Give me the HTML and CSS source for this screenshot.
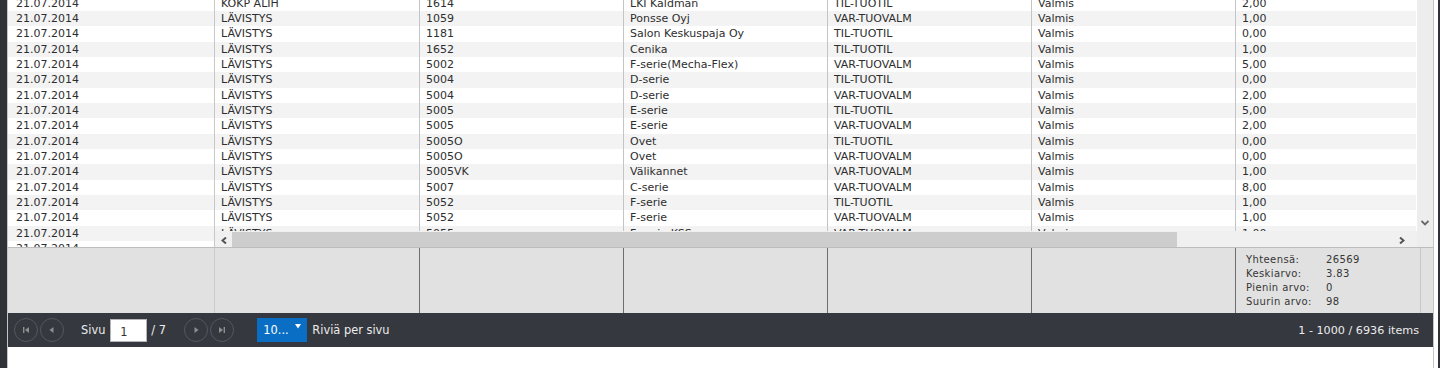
FILE: index.html
```html
<!DOCTYPE html>
<html lang="fi">
<head>
    <meta charset="UTF-8">
    <title>Työvaiheet</title>
    <link rel="stylesheet" href="styles.css">
</head>
<body>
<div class="page">
    <div class="grid">
        <div class="grid-content">
            <div class="locked">
                <div class="rows locked-rows">
                    <div class="row"><div class="cell">21.07.2014</div></div>
                    <div class="row"><div class="cell">21.07.2014</div></div>
                    <div class="row"><div class="cell">21.07.2014</div></div>
                    <div class="row"><div class="cell">21.07.2014</div></div>
                    <div class="row"><div class="cell">21.07.2014</div></div>
                    <div class="row"><div class="cell">21.07.2014</div></div>
                    <div class="row"><div class="cell">21.07.2014</div></div>
                    <div class="row"><div class="cell">21.07.2014</div></div>
                    <div class="row"><div class="cell">21.07.2014</div></div>
                    <div class="row"><div class="cell">21.07.2014</div></div>
                    <div class="row"><div class="cell">21.07.2014</div></div>
                    <div class="row"><div class="cell">21.07.2014</div></div>
                    <div class="row"><div class="cell">21.07.2014</div></div>
                    <div class="row"><div class="cell">21.07.2014</div></div>
                    <div class="row"><div class="cell">21.07.2014</div></div>
                    <div class="row"><div class="cell">21.07.2014</div></div>
                    <div class="row"><div class="cell">21.07.2014</div></div>
                </div>
            </div>
            <div class="scroll-wrap">
                <div class="scroll-main">
                    <div class="rows data-rows">
                        <div class="row"><div class="cell">KOKP ALIH</div><div class="cell">1614</div><div class="cell">LKI Käldman</div><div class="cell">TIL-TUOTIL</div><div class="cell">Valmis</div><div class="cell">2,00</div></div>
                        <div class="row"><div class="cell">LÄVISTYS</div><div class="cell">1059</div><div class="cell">Ponsse Oyj</div><div class="cell">VAR-TUOVALM</div><div class="cell">Valmis</div><div class="cell">1,00</div></div>
                        <div class="row"><div class="cell">LÄVISTYS</div><div class="cell">1181</div><div class="cell">Salon Keskuspaja Oy</div><div class="cell">TIL-TUOTIL</div><div class="cell">Valmis</div><div class="cell">0,00</div></div>
                        <div class="row"><div class="cell">LÄVISTYS</div><div class="cell">1652</div><div class="cell">Cenika</div><div class="cell">TIL-TUOTIL</div><div class="cell">Valmis</div><div class="cell">1,00</div></div>
                        <div class="row"><div class="cell">LÄVISTYS</div><div class="cell">5002</div><div class="cell">F-serie(Mecha-Flex)</div><div class="cell">VAR-TUOVALM</div><div class="cell">Valmis</div><div class="cell">5,00</div></div>
                        <div class="row"><div class="cell">LÄVISTYS</div><div class="cell">5004</div><div class="cell">D-serie</div><div class="cell">TIL-TUOTIL</div><div class="cell">Valmis</div><div class="cell">0,00</div></div>
                        <div class="row"><div class="cell">LÄVISTYS</div><div class="cell">5004</div><div class="cell">D-serie</div><div class="cell">VAR-TUOVALM</div><div class="cell">Valmis</div><div class="cell">2,00</div></div>
                        <div class="row"><div class="cell">LÄVISTYS</div><div class="cell">5005</div><div class="cell">E-serie</div><div class="cell">TIL-TUOTIL</div><div class="cell">Valmis</div><div class="cell">5,00</div></div>
                        <div class="row"><div class="cell">LÄVISTYS</div><div class="cell">5005</div><div class="cell">E-serie</div><div class="cell">VAR-TUOVALM</div><div class="cell">Valmis</div><div class="cell">2,00</div></div>
                        <div class="row"><div class="cell">LÄVISTYS</div><div class="cell">5005O</div><div class="cell">Ovet</div><div class="cell">TIL-TUOTIL</div><div class="cell">Valmis</div><div class="cell">0,00</div></div>
                        <div class="row"><div class="cell">LÄVISTYS</div><div class="cell">5005O</div><div class="cell">Ovet</div><div class="cell">VAR-TUOVALM</div><div class="cell">Valmis</div><div class="cell">0,00</div></div>
                        <div class="row"><div class="cell">LÄVISTYS</div><div class="cell">5005VK</div><div class="cell">Välikannet</div><div class="cell">VAR-TUOVALM</div><div class="cell">Valmis</div><div class="cell">1,00</div></div>
                        <div class="row"><div class="cell">LÄVISTYS</div><div class="cell">5007</div><div class="cell">C-serie</div><div class="cell">VAR-TUOVALM</div><div class="cell">Valmis</div><div class="cell">8,00</div></div>
                        <div class="row"><div class="cell">LÄVISTYS</div><div class="cell">5052</div><div class="cell">F-serie</div><div class="cell">TIL-TUOTIL</div><div class="cell">Valmis</div><div class="cell">1,00</div></div>
                        <div class="row"><div class="cell">LÄVISTYS</div><div class="cell">5052</div><div class="cell">F-serie</div><div class="cell">VAR-TUOVALM</div><div class="cell">Valmis</div><div class="cell">1,00</div></div>
                        <div class="row"><div class="cell">LÄVISTYS</div><div class="cell">5055</div><div class="cell">F-serie KSS</div><div class="cell">VAR-TUOVALM</div><div class="cell">Valmis</div><div class="cell">1,00</div></div>
                    </div>
                    <div class="hscroll">
                        <span class="arrow-btn">
                            <svg width="6" height="7" viewBox="0 0 6 7"><polyline points="5,0.5 1.5,3.5 5,6.5" fill="none" stroke="#555" stroke-width="2"/></svg>
                        </span>
                        <span class="hthumb"></span>
                        <span class="arrow-btn right">
                            <svg width="6" height="7" viewBox="0 0 6 7"><polyline points="1,0.5 4.5,3.5 1,6.5" fill="none" stroke="#555" stroke-width="2"/></svg>
                        </span>
                    </div>
                </div>
                <div class="vscroll">
                    <span class="down-arrow">
                        <svg width="8" height="6" viewBox="0 0 8 6"><polyline points="0.5,1 4,4.5 7.5,1" fill="none" stroke="#666" stroke-width="1.8"/></svg>
                    </span>
                </div>
            </div>
        </div>

        <div class="grid-footer">
            <div class="foot-cell locked-foot"></div>
            <div class="foot-cell first"></div>
            <div class="foot-cell"></div>
            <div class="foot-cell"></div>
            <div class="foot-cell"></div>
            <div class="foot-cell"></div>
            <div class="foot-cell aggregates">
                <div class="agg-line"><span class="agg-label">Yhteensä:</span><span>26569</span></div>
                <div class="agg-line"><span class="agg-label">Keskiarvo:</span><span>3.83</span></div>
                <div class="agg-line"><span class="agg-label">Pienin arvo:</span><span>0</span></div>
                <div class="agg-line"><span class="agg-label">Suurin arvo:</span><span>98</span></div>
            </div>
        </div>

        <div class="pager">
            <span class="pager-btn">
                <svg width="6" height="6" viewBox="0 0 6 6"><rect x="0" y="0" width="1.4" height="6"/><polygon points="6,0 6,6 2,3"/></svg>
            </span>
            <span class="pager-btn">
                <svg width="6" height="6" viewBox="0 0 6 6"><polygon points="4.5,0 4.5,6 0.5,3"/></svg>
            </span>
            <span class="pager-label">Sivu</span>
            <input class="page-input" type="text" value="1">
            <span class="page-total">/ 7</span>
            <span class="pager-btn">
                <svg width="6" height="6" viewBox="0 0 6 6"><polygon points="1.5,0 1.5,6 5.5,3"/></svg>
            </span>
            <span class="pager-btn">
                <svg width="6" height="6" viewBox="0 0 6 6"><polygon points="0,0 0,6 4,3"/><rect x="4.6" y="0" width="1.4" height="6"/></svg>
            </span>
            <span class="page-size">
                <span>10...</span>
                <svg class="size-arrow" width="6" height="5" viewBox="0 0 6 5"><polygon points="0,0 6,0 3,4.5" fill="#fff"/></svg>
            </span>
            <span class="pager-label size-label">Riviä per sivu</span>
            <span class="pager-info">1 - 1000 / 6936 items</span>
        </div>
    </div>
</div>
</body>
</html>
```

FILE: styles.css
```css
body {
    margin: 0;
    background-color: #2f3237;
    font-family: "DejaVu Sans", Verdana, sans-serif;
    font-size: 11px;
    color: #2e2e2e;
    height: 368px;
    overflow: hidden;
}
.page {
    margin: 0 2px 0 7px;
    height: 368px;
    background-color: #fff;
    border-left: 1px solid #c5c5c5;
}
.grid {
    margin-right: 4px;
    height: 368px;
    border-right: 1px solid #c5c5c5;
    background-color: #fff;
}
.grid-content {
    display: flex;
    height: 247px;
}
.locked {
    width: 206px;
    border-right: 1px solid #c8c8c8;
    overflow: hidden;
}
.rows {
    margin-top: -4.333px;
}
.row {
    display: flex;
    height: 15.333px;
    line-height: 15.333px;
    white-space: nowrap;
}
.row:nth-child(even) {
    background-color: #f3f3f3;
}
.locked-rows .cell {
    padding-left: 8px;
}
.scroll-wrap {
    flex: 1;
    display: flex;
    min-width: 0;
}
.scroll-main {
    flex: 1;
    min-width: 0;
    display: flex;
    flex-direction: column;
}
.data-rows {
    height: 235.333px;
    overflow: hidden;
    border-right: 1px solid #fff;
}
.data-rows .cell {
    flex: none;
    width: 204px;
    box-sizing: border-box;
    padding-left: 6px;
    border-left: 1px solid #c4c4c4;
    overflow: hidden;
}
.data-rows .cell:first-child {
    border-left: none;
}
.hscroll {
    height: 16px;
    background-color: #f0f0f0;
    display: flex;
    align-items: flex-end;
}
.arrow-btn {
    width: 17px;
    height: 16px;
    display: flex;
    align-items: center;
    justify-content: center;
    align-self: flex-start;
    margin-top: 1px;
}
.arrow-btn.right {
    margin-left: auto;
    width: 22px;
    justify-content: flex-start;
    padding-left: 4px;
    box-sizing: border-box;
}
.hthumb {
    width: 945px;
    height: 15px;
    background-color: #cdcdcd;
}
.vscroll {
    width: 16px;
    background-color: #ededed;
    position: relative;
}
.down-arrow {
    position: absolute;
    left: 4px;
    top: 220px;
    line-height: 0;
}
.grid-footer {
    display: flex;
    height: 65px;
    border-top: 1px solid #bdbdbd;
    background-color: #e1e1e1;
}
.foot-cell {
    width: 203px;
    border-left: 1px solid #6e6e6e;
}
.foot-cell.locked-foot {
    width: 206px;
    border-left: none;
    border-right: 1px solid #cacaca;
}
.foot-cell.first {
    width: 204px;
    border-left: none;
}
.aggregates {
    width: 174px;
    border-right: 1px solid #c8c8c8;
    padding: 5px 0 0 10px;
    font-size: 10px;
    letter-spacing: 0.4px;
    line-height: 14px;
    color: #363636;
}
.agg-line {
    display: flex;
    white-space: nowrap;
}
.agg-label {
    width: 80px;
}
.pager {
    display: flex;
    align-items: center;
    height: 34px;
    padding: 0 14px 0 6px;
    background-color: #35383f;
    color: #ececec;
    font-size: 11.4px;
}
.pager-btn {
    width: 24px;
    height: 24px;
    margin-right: 2px;
    border: 1px solid #54575e;
    border-radius: 50%;
    box-sizing: border-box;
    display: flex;
    align-items: center;
    justify-content: center;
    fill: #8e8e8e;
}
.pager-label {
    margin-left: 15px;
}
.page-input {
    width: 37px;
    height: 23px;
    margin-left: 5px;
    padding: 3px 0 0 9px;
    box-sizing: border-box;
    border: 1px solid #b5b5b5;
    font-family: "DejaVu Sans", Verdana, sans-serif;
    font-size: 11.4px;
    color: #333;
}
.page-total {
    margin-left: 4px;
    width: 33px;
}
.page-size {
    display: flex;
    width: 50px;
    height: 24px;
    margin-left: 21px;
    padding-left: 6px;
    box-sizing: border-box;
    background-color: #0a6fc4;
    color: #fff;
    align-items: center;
}
.size-arrow {
    align-self: flex-start;
    margin: 6px 0 0 6px;
}
.size-label {
    margin-left: 5px;
}
.pager-info {
    margin-left: auto;
    font-size: 11.2px;
}
```
